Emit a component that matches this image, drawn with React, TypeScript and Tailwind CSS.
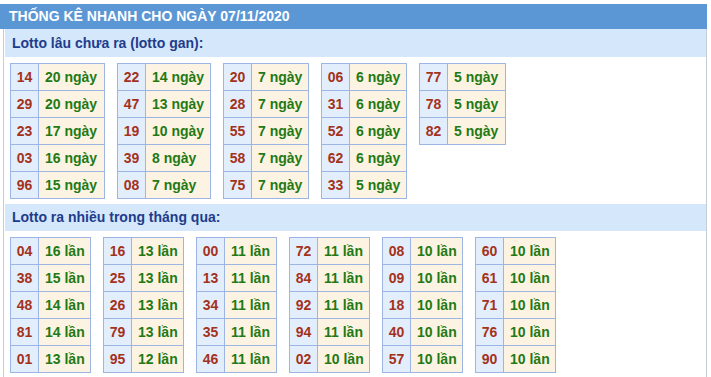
import React from "react";

type Row = [string, string];

const ganTables: Row[][] = [
  [["14", "20"], ["29", "20"], ["23", "17"], ["03", "16"], ["96", "15"]],
  [["22", "14"], ["47", "13"], ["19", "10"], ["39", "8"], ["08", "7"]],
  [["20", "7"], ["28", "7"], ["55", "7"], ["58", "7"], ["75", "7"]],
  [["06", "6"], ["31", "6"], ["52", "6"], ["62", "6"], ["33", "5"]],
  [["77", "5"], ["78", "5"], ["82", "5"]],
];

const hotTables: Row[][] = [
  [["04", "16"], ["38", "15"], ["48", "14"], ["81", "14"], ["01", "13"]],
  [["16", "13"], ["25", "13"], ["26", "13"], ["79", "13"], ["95", "12"]],
  [["00", "11"], ["13", "11"], ["34", "11"], ["35", "11"], ["46", "11"]],
  [["72", "11"], ["84", "11"], ["92", "11"], ["94", "11"], ["02", "10"]],
  [["08", "10"], ["09", "10"], ["18", "10"], ["40", "10"], ["57", "10"]],
  [["60", "10"], ["61", "10"], ["71", "10"], ["76", "10"], ["90", "10"]],
];

// width of the value column, by table
const ganWidths = ["w-[65px]", "w-[64px]", "w-[56px]", "w-[56px]", "w-[57px]"];

function LotoTable({ rows, unit, valueWidth }: { rows: Row[]; unit: string; valueWidth: string }) {
  return (
    <table className="border-collapse text-[14px] font-bold">
      <tbody>
        {rows.map(([num, count]) => (
          <tr key={num}>
            <td className="border border-[#9db5e3] bg-[#e3eefc] p-0 text-[#a3321b]">
              <div className="flex h-[26px] w-[27px] items-center justify-center">{num}</div>
            </td>
            <td className="border border-[#9db5e3] bg-[#fdf3e2] p-0 text-[#1f7a16]">
              <div className={`flex h-[26px] items-center whitespace-nowrap pl-[6px] ${valueWidth}`}>
                {count} {unit}
              </div>
            </td>
          </tr>
        ))}
      </tbody>
    </table>
  );
}

function SubHeader({ children, tall }: { children: React.ReactNode; tall?: boolean }) {
  return (
    <div
      className={`ml-[1px] flex items-center bg-[#d5e7fa] pl-[7px] text-[14px] font-bold text-[#1e3c8c] ${
        tall ? "h-[28px]" : "h-[27px]"
      }`}
    >
      {children}
    </div>
  );
}

export default function App() {
  return (
    <div className="bg-white pt-[4px] font-['Liberation_Sans',Arial,sans-serif]">
      <div className="w-[707px]">
        <div className="flex h-[25px] items-center bg-[#5b97d5] pl-[9px] text-[14px] font-bold text-white">
          THỐNG KÊ NHANH CHO NGÀY 07/11/2020
        </div>
        <div className="ml-[3px] w-[704px] border-x border-[#c5cdd8] pb-[5px]">
          <SubHeader tall>Lotto lâu chưa ra (lotto gan):</SubHeader>
          <div className="flex flex-wrap items-start gap-3 pb-[5px] pl-[6px] pt-[6px]">
            {ganTables.map((rows, i) => (
              <LotoTable key={i} rows={rows} unit="ngày" valueWidth={ganWidths[i]} />
            ))}
          </div>
          <SubHeader>Lotto ra nhiều trong tháng qua:</SubHeader>
          <div className="flex flex-wrap items-start gap-3 py-[6px] pl-[6px]">
            {hotTables.map((rows, i) => (
              <LotoTable key={i} rows={rows} unit="lần" valueWidth="w-[51px]" />
            ))}
          </div>
        </div>
      </div>
    </div>
  );
}
